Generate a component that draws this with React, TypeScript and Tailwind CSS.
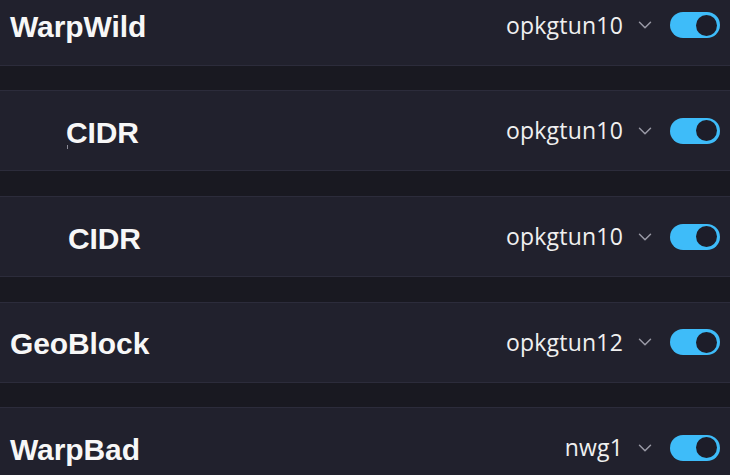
import { ChevronDown } from "lucide-react";

type Rule = {
  name: string;
  iface: string;
  indent?: string;
  caret?: boolean;
};

const rules: Rule[] = [
  { name: "WarpWild", iface: "opkgtun10" },
  { name: "CIDR", iface: "opkgtun10", indent: "pl-[56px]", caret: true },
  { name: "CIDR", iface: "opkgtun10", indent: "pl-[58px]" },
  { name: "GeoBlock", iface: "opkgtun12" },
  { name: "WarpBad", iface: "nwg1" },
];

function Toggle() {
  return (
    <div className="w-[50px] h-[26px] rounded-full bg-[#3ebcf9] flex items-center justify-end pr-[3px] shrink-0">
      <div className="w-[21px] h-[21px] rounded-full bg-[#1d1d29]" />
    </div>
  );
}

function RuleRow({ rule }: { rule: Rule }) {
  return (
    <div className="h-[81px] border-y border-[#2c2c3b] bg-[#21212d] flex items-center justify-between pl-[10px] pr-[10px]">
      <div className={`pt-[5px] ${rule.indent ?? ""}`}>
        <span className="relative text-[30px] font-bold text-[#f7f7f7] font-['Liberation_Sans',sans-serif] tracking-[-0.1px] leading-none">
          {rule.caret && (
            <span className="absolute left-[1px] top-[29px] w-px h-[4px] bg-[#8a8a96]" />
          )}
          {rule.name}
        </span>
      </div>
      <div className="flex items-center">
        <span className="text-[23px] font-medium text-[#f0f0f0] font-['Open_Sans',sans-serif] leading-none tracking-[0.2px]">
          {rule.iface}
        </span>
        <ChevronDown
          className="ml-[11px] mr-[14px] text-[#9a9aa6]"
          size={22}
          strokeWidth={1.6}
        />
        <Toggle />
      </div>
    </div>
  );
}

export default function App() {
  return (
    <div className="w-[730px] h-[475px] overflow-hidden bg-[#191921]">
      <div className="-mt-[15.3px] flex flex-col gap-[24.67px]">
        {rules.map((rule, i) => (
          <RuleRow key={i} rule={rule} />
        ))}
      </div>
    </div>
  );
}
